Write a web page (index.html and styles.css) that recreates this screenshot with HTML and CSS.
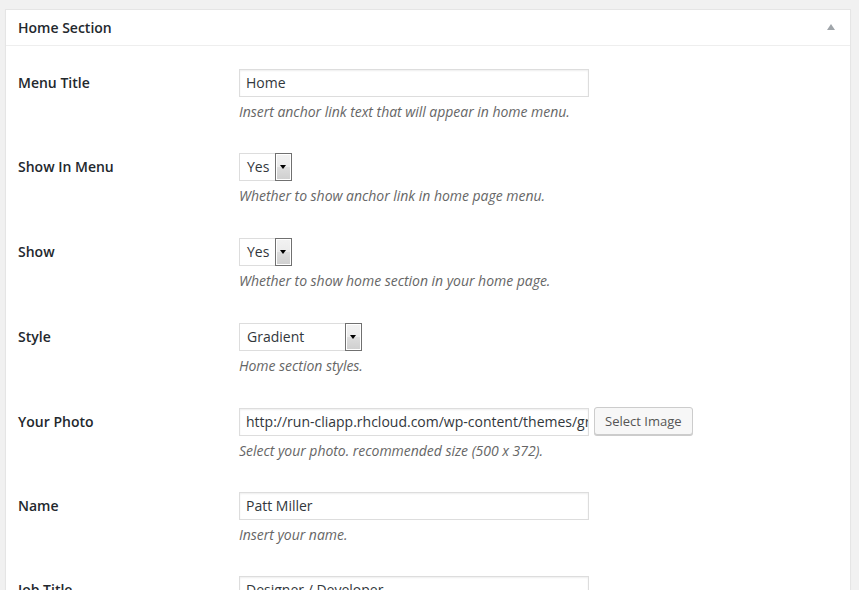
FILE: index.html
```html
<!DOCTYPE html>
<html>
<head>
<meta charset="utf-8">
<link rel="stylesheet" href="styles.css">
</head>
<body>
<div class="wrap">
  <div class="postbox">
    <div class="hndle">
      <span class="title">Home Section</span>
      <span class="toggle"></span>
    </div>
    <div class="inside">
      <div class="row short">
        <div class="label">Menu Title</div>
        <div class="field">
          <div class="text">Home</div>
          <p class="desc">Insert anchor link text that will appear in home menu.</p>
        </div>
      </div>
      <div class="row">
        <div class="label">Show In Menu</div>
        <div class="field">
          <div class="select sel-yes">Yes<span class="arrow"></span></div>
          <p class="desc">Whether to show anchor link in home page menu.</p>
        </div>
      </div>
      <div class="row">
        <div class="label">Show</div>
        <div class="field">
          <div class="select sel-yes">Yes<span class="arrow"></span></div>
          <p class="desc">Whether to show home section in your home page.</p>
        </div>
      </div>
      <div class="row">
        <div class="label">Style</div>
        <div class="field">
          <div class="select sel-grad">Gradient<span class="arrow"></span></div>
          <p class="desc">Home section styles.</p>
        </div>
      </div>
      <div class="row short">
        <div class="label">Your Photo</div>
        <div class="field">
          <div class="line">
            <div class="text">http://run-cliapp.rhcloud.com/wp-content/themes/gridfolio/images/photo.png</div>
            <div class="button">Select Image</div>
          </div>
          <p class="desc">Select your photo. recommended size (500 x 372).</p>
        </div>
      </div>
      <div class="row short">
        <div class="label">Name</div>
        <div class="field">
          <div class="text">Patt Miller</div>
          <p class="desc">Insert your name.</p>
        </div>
      </div>
      <div class="row">
        <div class="label">Job Title</div>
        <div class="field">
          <div class="text">Designer / Developer</div>
          <p class="desc">Insert your job title.</p>
        </div>
      </div>
    </div>
  </div>
</div>
</body>
</html>
```
FILE: styles.css
```css
html, body {
  margin: 0;
  padding: 0;
  background: #f1f1f1;
  height: 590px;
  overflow: hidden;
}
body {
  font-family: "Open Sans", "Liberation Sans", sans-serif;
  font-size: 14px;
  color: #444;
}
.wrap {
  padding: 9px 8px 0 5px;
}
.postbox {
  background: #fff;
  border: 1px solid #e5e5e5;
  box-shadow: 0 1px 1px rgba(0,0,0,0.04);
}
.hndle {
  height: 35px;
  border-bottom: 1px solid #eee;
  display: flex;
  align-items: center;
  justify-content: space-between;
  padding: 0 15px 0 12px;
}
.title {
  font-weight: 600;
  font-size: 14px;
  color: #23282d;
  line-height: 20px;
}
.toggle {
  width: 0;
  height: 0;
  border-left: 4px solid transparent;
  border-right: 4px solid transparent;
  border-bottom: 6px solid #a0a5aa;
  margin-bottom: 1px;
}
.inside {
  padding: 0 12px;
}
.row {
  display: grid;
  grid-template-columns: 221px 1fr;
  height: 85px;
  padding-top: 23px;
  box-sizing: border-box;
}
.row.short {
  height: 84px;
}
.label {
  font-weight: 600;
  color: #23282d;
  line-height: 28px;
}
.field {
  display: flex;
  flex-direction: column;
  align-items: flex-start;
}
.line {
  display: flex;
  gap: 5px;
  align-items: flex-start;
}
.text {
  width: 350px;
  height: 28px;
  box-sizing: border-box;
  border: 1px solid #ddd;
  box-shadow: inset 0 1px 2px rgba(0,0,0,0.07);
  padding: 0 6px;
  line-height: 26px;
  color: #32373c;
  white-space: nowrap;
  overflow: hidden;
}
.select {
  position: relative;
  height: 28px;
  box-sizing: border-box;
  border: 1px solid #ddd;
  padding: 0 7px;
  line-height: 26px;
  color: #32373c;
}
.sel-yes { width: 53px; }
.sel-grad { width: 123px; }
.arrow {
  position: absolute;
  right: -1px;
  top: -1px;
  bottom: -1px;
  width: 17px;
  box-sizing: border-box;
  border: 1px solid #707070;
  box-shadow: inset 0 0 0 1px #fff;
  background: linear-gradient(#f2f2f2 0%, #ebebeb 50%, #dddddd 51%, #cfcfcf 100%);
}
.arrow::after {
  content: "";
  position: absolute;
  left: 4px;
  top: 11px;
  width: 0;
  height: 0;
  border-left: 3.5px solid transparent;
  border-right: 3.5px solid transparent;
  border-top: 4px solid #000;
}
.button {
  height: 28px;
  box-sizing: border-box;
  border: 1px solid #ccc;
  border-radius: 3px;
  background: #f7f7f7;
  box-shadow: 0 1px 0 #ccc;
  padding: 0 10px;
  line-height: 26px;
  font-size: 13px;
  color: #555;
  margin-top: -1px;
}
.desc {
  margin: 5px 0 0;
  font-style: italic;
  color: #666;
  line-height: 20px;
  font-size: 14px;
  letter-spacing: -0.03px;
}
```
